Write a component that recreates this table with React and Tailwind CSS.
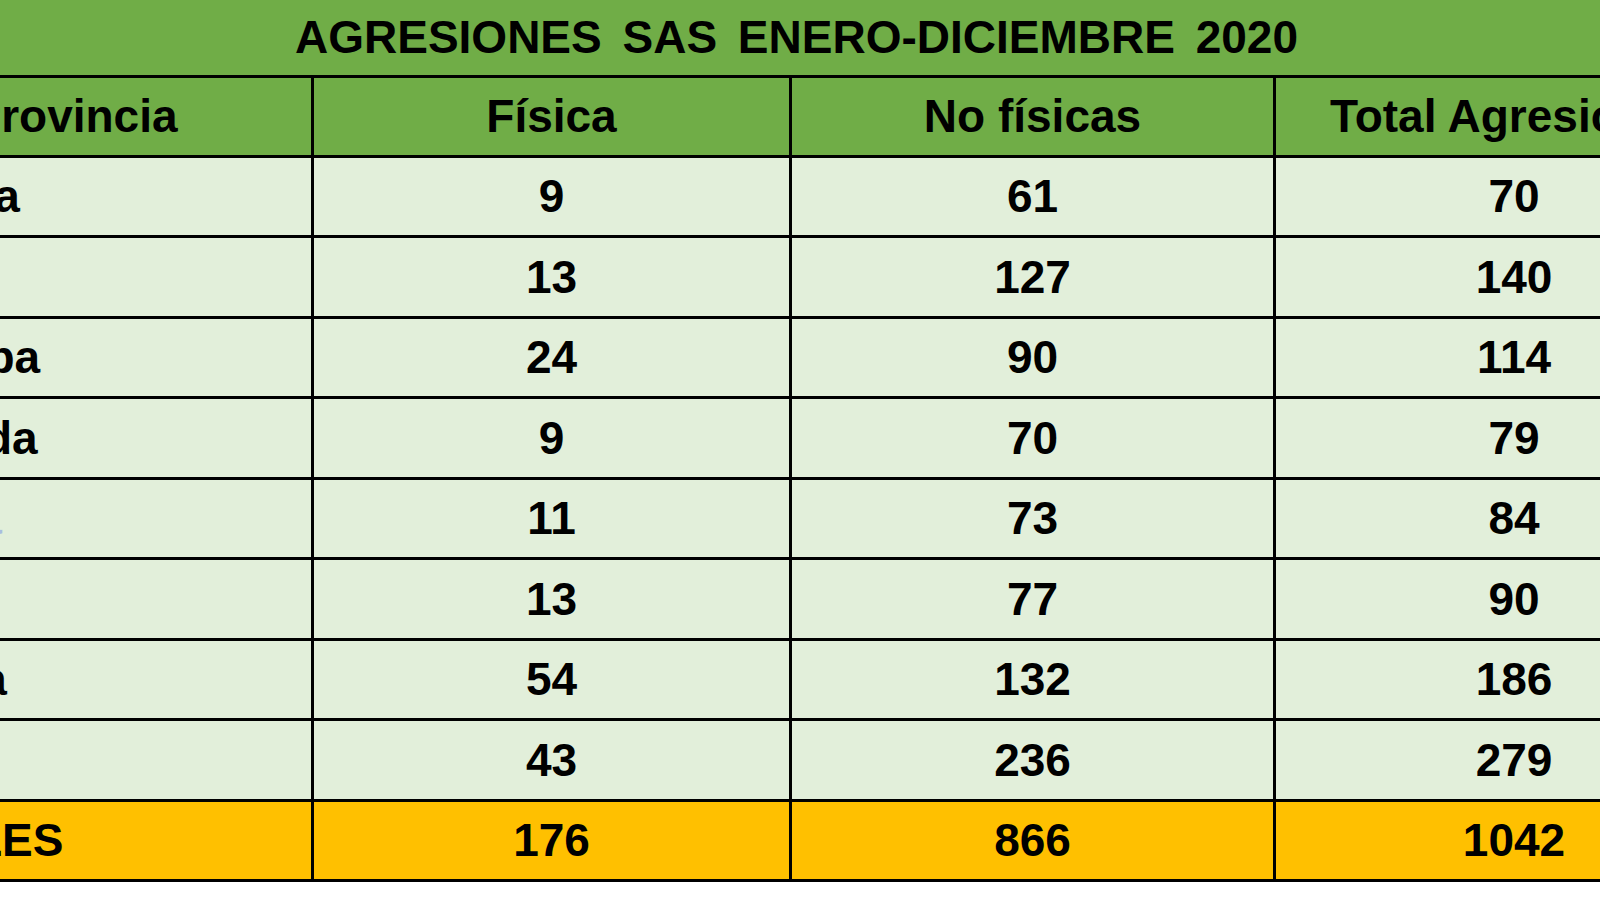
import React from 'react';

const rows = [
  { name: 'Almería', fisica: 9, noFisicas: 61, total: 70 },
  { name: 'Cádiz', fisica: 13, noFisicas: 127, total: 140 },
  { name: 'Córdoba', fisica: 24, noFisicas: 90, total: 114 },
  { name: 'Granada', fisica: 9, noFisicas: 70, total: 79 },
  { name: 'Huelva', fisica: 11, noFisicas: 73, total: 84, link: true },
  { name: 'Jaén', fisica: 13, noFisicas: 77, total: 90 },
  { name: 'Málaga', fisica: 54, noFisicas: 132, total: 186 },
  { name: 'Sevilla', fisica: 43, noFisicas: 236, total: 279 },
];

const App = () => {
  return (
    <div className="w-[1600px] h-[900px] overflow-hidden bg-white font-['Liberation_Sans',Arial,sans-serif] font-bold text-[46px] text-black">
      <table className="ml-[-162px] w-[1914px] border-collapse table-fixed">
        <colgroup>
          <col className="w-[473px]" />
          <col className="w-[478px]" />
          <col className="w-[484px]" />
          <col className="w-[479px]" />
        </colgroup>
        <tbody>
          {/* Title band */}
          <tr className="h-[76px] bg-[#70ad47]">
            <td colSpan={4} className="text-center border-b-[3px] border-black [word-spacing:8px] leading-none">
              AGRESIONES SAS ENERO-DICIEMBRE 2020
            </td>
          </tr>

          {/* Column headers */}
          <tr className="h-[80px] bg-[#70ad47]">
            <td className="border-[3px] border-black text-center pr-[4px] leading-none">Provincia</td>
            <td className="border-[3px] border-black text-center leading-none">Física</td>
            <td className="border-[3px] border-black text-center leading-none">No físicas</td>
            <td className="border-[3px] border-black text-center leading-none">Total Agresiones</td>
          </tr>

          {rows.map((r, i) => (
            <tr key={i} className="h-[80.5px] bg-[#e2efda]">
              <td className={`border-[3px] border-black pl-[10px] leading-none ${r.link ? 'text-[#a9bedf]' : ''}`}>
                {r.name}
              </td>
              <td className="border-[3px] border-black text-center leading-none">{r.fisica}</td>
              <td className="border-[3px] border-black text-center leading-none">{r.noFisicas}</td>
              <td className="border-[3px] border-black text-center leading-none">{r.total}</td>
            </tr>
          ))}

          {/* Totals */}
          <tr className="h-[80px] bg-[#ffc000]">
            <td className="border-[3px] border-black pl-[12px] leading-none">TOTALES</td>
            <td className="border-[3px] border-black text-center leading-none">176</td>
            <td className="border-[3px] border-black text-center leading-none">866</td>
            <td className="border-[3px] border-black text-center leading-none">1042</td>
          </tr>
        </tbody>
      </table>
    </div>
  );
};

export default App;
